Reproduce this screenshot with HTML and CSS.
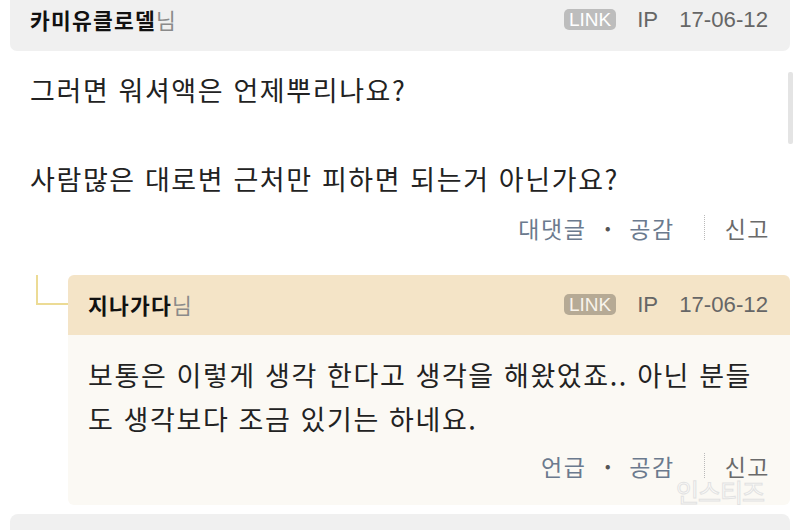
FILE: index.html
```html
<!DOCTYPE html>
<html lang="ko">
<head>
<meta charset="utf-8">
<link rel="stylesheet" href="styles.css">
</head>
<body>
<div class="thread">
  <div class="comment">
    <div class="head">
      <div class="name"><b>카미유클로델</b><span class="nim">님</span></div>
      <div class="meta"><span class="badge">LINK</span><span>IP</span><span>17-06-12</span></div>
    </div>
    <div class="content">
      <p class="text">그러면 워셔액은 언제뿌리나요?<br><br>사람많은 대로변 근처만 피하면 되는거 아닌가요?</p>
      <div class="scrollbar"></div>
      <div class="actions"><span class="act">대댓글</span><span class="dot">·</span><span class="act">공감</span><span class="sep"></span><span class="report">신고</span></div>
    </div>
  </div>

  <div class="reply">
    <div class="rhead">
      <div class="name"><b>지나가다</b><span class="nim">님</span></div>
      <div class="meta"><span class="badge rbadge">LINK</span><span>IP</span><span>17-06-12</span></div>
    </div>
    <div class="rbody">
      <p class="text">보통은 이렇게 생각 한다고 생각을 해왔었죠.. 아닌 분들<br>도 생각보다 조금 있기는 하네요.</p>
      <div class="actions"><span class="act">언급</span><span class="dot">·</span><span class="act">공감</span><span class="sep"></span><span class="report">신고</span></div>
      <div class="watermark">인스티즈</div>
    </div>
  </div>

  <div class="next"></div>
</div>
</body>
</html>
```
FILE: styles.css
```css
html, body {
  margin: 0;
  padding: 0;
  background: #fff;
}
body {
  font-family: "Noto Sans CJK KR", "Noto Sans", sans-serif;
  color: #222;
  width: 800px;
  height: 530px;
  overflow: hidden;
}
.thread {
  padding: 0 10px;
}
.head {
  height: 51px;
  box-sizing: border-box;
  background: #f0f0f0;
  border-radius: 0 0 7px 7px;
  padding: 0 22px 12px 20px;
  display: flex;
  align-items: center;
  justify-content: space-between;
}
.name {
  font-size: 21.5px;
  line-height: 28px;
  color: #111;
  letter-spacing: 1.2px;
}
.name b {
  font-weight: 700;
}
.nim {
  color: #8a8a8a;
  font-weight: 400;
  margin-left: 0;
}
.meta {
  display: flex;
  align-items: center;
  gap: 21px;
  font-family: "Liberation Sans", Arial, sans-serif;
  font-size: 22.2px;
  color: #666;
}
.badge {
  background: #bdbdbd;
  color: #fff;
  font-size: 19px;
  line-height: 21px;
  height: 21px;
  padding: 0 5px;
  border-radius: 5px;
}
.rbadge {
  background: #b6aa95;
  color: #f8f3ea;
}
.content {
  position: relative;
  padding: 17px 22px 0 20px;
}
.text {
  margin: 0;
  font-size: 27px;
  line-height: 44.5px;
  color: #222;
  letter-spacing: 1.6px;
}
.scrollbar {
  position: absolute;
  right: -3px;
  top: 21px;
  width: 5px;
  height: 72px;
  background: #e4e4e4;
  border-radius: 2px;
}
.actions {
  display: flex;
  justify-content: flex-end;
  align-items: center;
  margin-top: 11px;
  margin-right: -2px;
  height: 30px;
  font-size: 23px;
  line-height: 30px;
  color: #6b7a8e;
  letter-spacing: 1.5px;
}
.dot {
  width: 43px;
  text-align: center;
  color: #555;
  font-weight: 700;
  letter-spacing: 0;
}
.sep {
  width: 0;
  height: 25px;
  border-left: 1px dotted #b9b9b9;
  margin: 0 20px 0 29px;
}
.report {
  color: #6a6a6a;
}
.reply {
  position: relative;
  margin: 32px 0 0 58px;
}
.reply::before {
  content: "";
  position: absolute;
  left: -32px;
  top: 0;
  width: 30px;
  height: 28px;
  border-left: 2px solid #ecdb95;
  border-bottom: 2px solid #ecdb95;
}
.rhead {
  height: 60px;
  box-sizing: border-box;
  background: #f4e4c7;
  border-radius: 6px 6px 0 0;
  padding: 0 22px 0 20px;
  display: flex;
  align-items: center;
  justify-content: space-between;
}
.rbody {
  position: relative;
  background: #fbf9f4;
  border-radius: 0 0 6px 6px;
  padding: 18px 22px 24px 20px;
}
.rbody .actions {
  margin-top: 9px;
}
.watermark {
  position: absolute;
  right: 26px;
  bottom: -1px;
  font-size: 25px;
  line-height: 30px;
  color: rgba(255, 255, 255, 0.6);
  -webkit-text-stroke: 1px #e2e2e2;
  letter-spacing: -1px;
}
.next {
  margin-top: 9px;
  height: 40px;
  background: #f0f0f0;
  border-radius: 8px 8px 0 0;
}
```
